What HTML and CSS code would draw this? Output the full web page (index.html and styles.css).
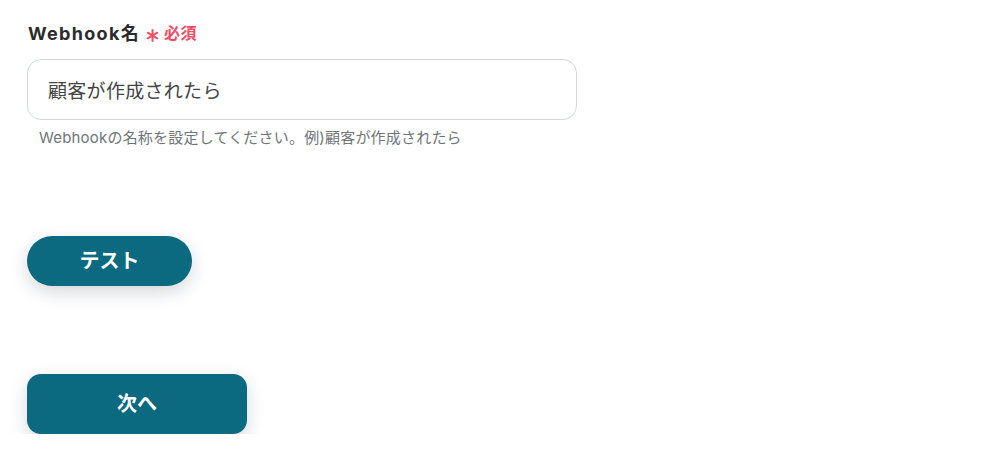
FILE: index.html
```html
<!DOCTYPE html>
<html lang="ja">
<head>
    <meta charset="UTF-8">
    <title>Webhook</title>
    <link rel="stylesheet" href="styles.css">
</head>
<body>
<div class="container">
    <div class="form-group">
        <label class="label">Webhook名
            <span class="req">
                <svg class="star" width="13" height="13" viewBox="0 0 13 13">
                    <g stroke="#f04c63" stroke-width="2" stroke-linecap="round">
                        <line x1="6.5" y1="1" x2="6.5" y2="12"/>
                        <line x1="1.7" y1="3.7" x2="11.3" y2="9.3"/>
                        <line x1="1.7" y1="9.3" x2="11.3" y2="3.7"/>
                    </g>
                </svg>必須
            </span>
        </label>
        <div class="input">顧客が作成されたら</div>
        <p class="help">Webhookの名称を設定してください。例)顧客が作成されたら</p>
    </div>
    <button class="btn btn-test">テスト</button>
    <button class="btn btn-next">次へ</button>
</div>
</body>
</html>
```

FILE: styles.css
```css
body {
    margin: 0;
    background: #fff;
    font-family: Inter, "Noto Sans CJK JP", sans-serif;
    color: #2b2b2b;
}
.container {
    padding: 18px 0 0 27px;
    display: flex;
    flex-direction: column;
    align-items: flex-start;
}
.form-group {
    width: 550px;
}
.label {
    display: flex;
    align-items: center;
    gap: 6px;
    font-size: 18px;
    letter-spacing: 1.3px;
    font-weight: 700;
    height: 28px;
    padding-left: 1px;
    color: #2b2b2b;
}
.req {
    color: #f04c63;
    font-size: 16px;
    letter-spacing: 0.5px;
    font-weight: 700;
    display: flex;
    align-items: center;
    gap: 5px;
}
.star {
    position: relative;
    top: 3px;
}
.input {
    margin-top: 13px;
    height: 59px;
    border: 1px solid #d4d8de;
    border-radius: 14px;
    padding: 0 20px;
    display: flex;
    align-items: center;
    font-size: 19px;
    letter-spacing: 0.3px;
    color: #444;
}
.help {
    margin: 6px 0 0 12px;
    font-size: 15px;
    letter-spacing: 0.2px;
    color: #6f7478;
}
.btn {
    border: none;
    background: #0b6980;
    color: #fff;
    font-family: inherit;
    font-size: 20px;
    font-weight: 700;
    padding: 0 0 4px;
    box-shadow: 0 6px 18px rgba(20, 40, 60, 0.18);
    cursor: pointer;
}
.btn-test {
    margin-top: 89px;
    width: 165px;
    height: 50px;
    border-radius: 25px;
}
.btn-next {
    margin-top: 88px;
    width: 220px;
    height: 60px;
    border-radius: 14px;
}
```
